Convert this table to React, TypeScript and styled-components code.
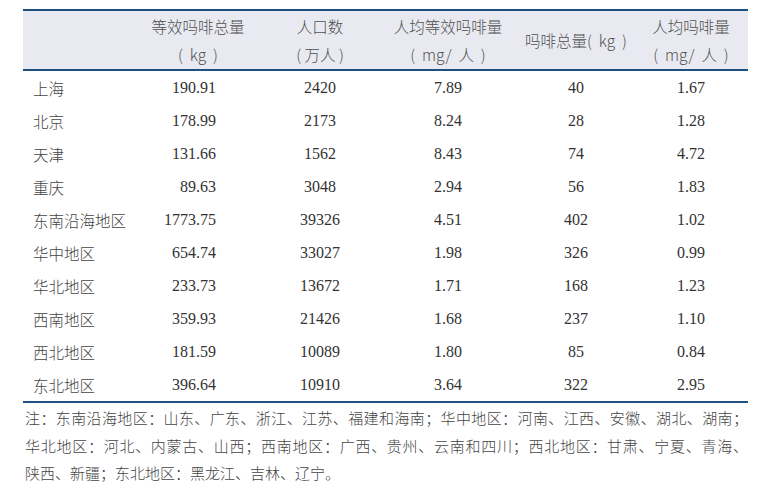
import React from 'react'
import styled, { createGlobalStyle } from 'styled-components'

const GlobalStyle = createGlobalStyle`
  html, body {
    margin: 0;
    padding: 0;
    background: #ffffff;
  }
`

const Page = styled.div`
  width: 782px;
  height: 500px;
  padding: 9px 0 0 23px;
  box-sizing: border-box;
`

const Table = styled.div`
  width: 725px;
  border-top: 2px solid #1d4f80;
  border-bottom: 2px solid #1d4f80;
`

const COLS = '117px 116px 128px 128px 128px 108px'

const HeaderRow = styled.div`
  display: grid;
  grid-template-columns: ${COLS};
  height: 58px;
  background: #e9eaf1;
  border-bottom: 2px solid #1d4f80;
`

const HeadCell = styled.div<{ $shift?: number }>`
  display: flex;
  flex-direction: column;
  justify-content: center;
  align-items: center;
  font-family: "Noto Sans CJK SC", "Liberation Sans", sans-serif;
  font-size: 15.5px;
  font-weight: 300;
  line-height: 28px;
  color: #505050;
  white-space: pre;
  padding-right: ${p => p.$shift ?? 0}px;
`

const Row = styled.div`
  display: grid;
  grid-template-columns: ${COLS};
  height: 33px;
  align-items: center;
`

const NameCell = styled.div`
  padding-left: 10px;
  font-family: "Noto Sans CJK SC", "Liberation Sans", sans-serif;
  font-size: 15.5px;
  font-weight: 300;
  color: #444444;
`

const NumCell = styled.div<{ $align: 'right' | 'center'; $pad?: number }>`
  text-align: ${p => p.$align};
  padding-right: ${p => p.$pad ?? 0}px;
  font-family: "Liberation Serif", "Times New Roman", serif;
  font-size: 16px;
  color: #333333;
`

const Note = styled.div`
  width: 725px;
  padding-top: 1px;
  font-family: "Noto Sans CJK SC", "Liberation Sans", sans-serif;
  font-size: 15px;
  font-weight: 300;
  line-height: 27.5px;
  color: #444444;
`

const NoteLine = styled.div<{ $full?: boolean }>`
  padding-left: 2px;
  text-align: ${p => (p.$full ? 'justify' : 'left')};
  text-align-last: ${p => (p.$full ? 'justify' : 'left')};
  white-space: ${p => (p.$full ? 'normal' : 'nowrap')};
`

const rows = [
  ['上海', '190.91', '2420', '7.89', '40', '1.67'],
  ['北京', '178.99', '2173', '8.24', '28', '1.28'],
  ['天津', '131.66', '1562', '8.43', '74', '4.72'],
  ['重庆', '89.63', '3048', '2.94', '56', '1.83'],
  ['东南沿海地区', '1773.75', '39326', '4.51', '402', '1.02'],
  ['华中地区', '654.74', '33027', '1.98', '326', '0.99'],
  ['华北地区', '233.73', '13672', '1.71', '168', '1.23'],
  ['西南地区', '359.93', '21426', '1.68', '237', '1.10'],
  ['西北地区', '181.59', '10089', '1.80', '85', '0.84'],
  ['东北地区', '396.64', '10910', '3.64', '322', '2.95'],
]

export default function App() {
  return (
    <Page>
      <GlobalStyle />
      <Table>
        <HeaderRow>
          <HeadCell />
          <HeadCell>
            <span>等效吗啡总量</span>
            <span>(  kg  )</span>
          </HeadCell>
          <HeadCell>
            <span>人口数</span>
            <span>( 万人 )</span>
          </HeadCell>
          <HeadCell>
            <span>人均等效吗啡量</span>
            <span>(  mg/  人  )</span>
          </HeadCell>
          <HeadCell>
            <span>吗啡总量(  kg  )</span>
          </HeadCell>
          <HeadCell $shift={6}>
            <span>人均吗啡量</span>
            <span>(  mg/  人  )</span>
          </HeadCell>
        </HeaderRow>
        {rows.map(r => (
          <Row key={r[0]}>
            <NameCell>{r[0]}</NameCell>
            <NumCell $align="right" $pad={40}>{r[1]}</NumCell>
            <NumCell $align="center">{r[2]}</NumCell>
            <NumCell $align="center">{r[3]}</NumCell>
            <NumCell $align="center">{r[4]}</NumCell>
            <NumCell $align="center" $pad={6}>{r[5]}</NumCell>
          </Row>
        ))}
      </Table>
      <Note>
        <NoteLine $full>注：东南沿海地区：山东、广东、浙江、江苏、福建和海南；华中地区：河南、江西、安徽、湖北、湖南；</NoteLine>
        <NoteLine $full>华北地区：河北、内蒙古、山西；西南地区：广西、贵州、云南和四川；西北地区：甘肃、宁夏、青海、</NoteLine>
        <NoteLine>陕西、新疆；东北地区：黑龙江、吉林、辽宁。</NoteLine>
      </Note>
    </Page>
  )
}
